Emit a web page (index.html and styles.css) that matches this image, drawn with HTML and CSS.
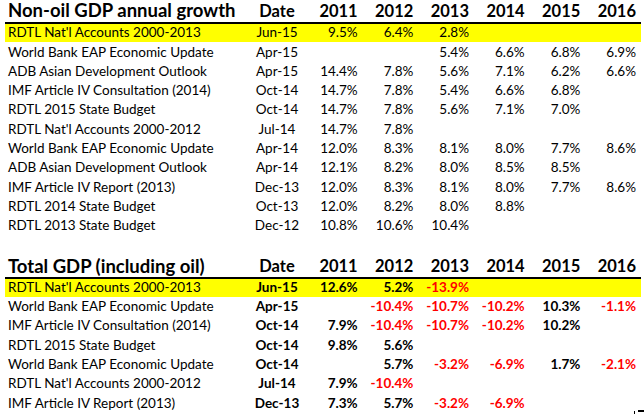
FILE: index.html
```html
<!DOCTYPE html>
<html>
<head>
<meta charset="utf-8">
<link rel="stylesheet" href="styles.css">
</head>
<body>
<div class="sheet">
  <div class="tbl">
    <div class="row head">
      <div class="name">Non-oil GDP annual growth</div><div class="date">Date</div>
      <div class="num">2011</div><div class="num">2012</div><div class="num">2013</div><div class="num">2014</div><div class="num">2015</div><div class="num">2016</div>
    </div>
    <div class="row hl">
      <div class="name">RDTL Nat'l Accounts 2000-2013</div><div class="date">Jun-15</div>
      <div class="num">9.5%</div><div class="num">6.4%</div><div class="num">2.8%</div><div class="num"></div><div class="num"></div><div class="num"></div>
    </div>
    <div class="row">
      <div class="name">World Bank EAP Economic Update</div><div class="date">Apr-15</div>
      <div class="num"></div><div class="num"></div><div class="num">5.4%</div><div class="num">6.6%</div><div class="num">6.8%</div><div class="num">6.9%</div>
    </div>
    <div class="row">
      <div class="name">ADB Asian Development Outlook</div><div class="date">Apr-15</div>
      <div class="num">14.4%</div><div class="num">7.8%</div><div class="num">5.6%</div><div class="num">7.1%</div><div class="num">6.2%</div><div class="num">6.6%</div>
    </div>
    <div class="row">
      <div class="name">IMF Article IV Consultation (2014)</div><div class="date">Oct-14</div>
      <div class="num">14.7%</div><div class="num">7.8%</div><div class="num">5.4%</div><div class="num">6.6%</div><div class="num">6.8%</div><div class="num"></div>
    </div>
    <div class="row">
      <div class="name">RDTL 2015 State Budget</div><div class="date">Oct-14</div>
      <div class="num">14.7%</div><div class="num">7.8%</div><div class="num">5.6%</div><div class="num">7.1%</div><div class="num">7.0%</div><div class="num"></div>
    </div>
    <div class="row">
      <div class="name">RDTL Nat'l Accounts 2000-2012</div><div class="date">Jul-14</div>
      <div class="num">14.7%</div><div class="num">7.8%</div><div class="num"></div><div class="num"></div><div class="num"></div><div class="num"></div>
    </div>
    <div class="row">
      <div class="name">World Bank EAP Economic Update</div><div class="date">Apr-14</div>
      <div class="num">12.0%</div><div class="num">8.3%</div><div class="num">8.1%</div><div class="num">8.0%</div><div class="num">7.7%</div><div class="num">8.6%</div>
    </div>
    <div class="row">
      <div class="name">ADB Asian Development Outlook</div><div class="date">Apr-14</div>
      <div class="num">12.1%</div><div class="num">8.2%</div><div class="num">8.0%</div><div class="num">8.5%</div><div class="num">8.5%</div><div class="num"></div>
    </div>
    <div class="row">
      <div class="name">IMF Article IV Report (2013)</div><div class="date">Dec-13</div>
      <div class="num">12.0%</div><div class="num">8.3%</div><div class="num">8.1%</div><div class="num">8.0%</div><div class="num">7.7%</div><div class="num">8.6%</div>
    </div>
    <div class="row">
      <div class="name">RDTL 2014 State Budget</div><div class="date">Oct-13</div>
      <div class="num">12.0%</div><div class="num">8.2%</div><div class="num">8.0%</div><div class="num">8.8%</div><div class="num"></div><div class="num"></div>
    </div>
    <div class="row">
      <div class="name">RDTL 2013 State Budget</div><div class="date">Dec-12</div>
      <div class="num">10.8%</div><div class="num">10.6%</div><div class="num">10.4%</div><div class="num"></div><div class="num"></div><div class="num"></div>
    </div>
  </div>

  <div class="spacer"></div>

  <div class="tbl total">
    <div class="row head head2">
      <div class="name">Total GDP (including oil)</div><div class="date">Date</div>
      <div class="num">2011</div><div class="num">2012</div><div class="num">2013</div><div class="num">2014</div><div class="num">2015</div><div class="num">2016</div>
    </div>
    <div class="row hl">
      <div class="name">RDTL Nat'l Accounts 2000-2013</div><div class="date">Jun-15</div>
      <div class="num">12.6%</div><div class="num">5.2%</div><div class="num neg">-13.9%</div><div class="num"></div><div class="num"></div><div class="num"></div>
    </div>
    <div class="row">
      <div class="name">World Bank EAP Economic Update</div><div class="date">Apr-15</div>
      <div class="num"></div><div class="num neg">-10.4%</div><div class="num neg">-10.7%</div><div class="num neg">-10.2%</div><div class="num">10.3%</div><div class="num neg">-1.1%</div>
    </div>
    <div class="row">
      <div class="name">IMF Article IV Consultation (2014)</div><div class="date">Oct-14</div>
      <div class="num">7.9%</div><div class="num neg">-10.4%</div><div class="num neg">-10.7%</div><div class="num neg">-10.2%</div><div class="num">10.2%</div><div class="num"></div>
    </div>
    <div class="row">
      <div class="name">RDTL 2015 State Budget</div><div class="date">Oct-14</div>
      <div class="num">9.8%</div><div class="num">5.6%</div><div class="num"></div><div class="num"></div><div class="num"></div><div class="num"></div>
    </div>
    <div class="row">
      <div class="name">World Bank EAP Economic Update</div><div class="date">Oct-14</div>
      <div class="num"></div><div class="num">5.7%</div><div class="num neg">-3.2%</div><div class="num neg">-6.9%</div><div class="num">1.7%</div><div class="num neg">-2.1%</div>
    </div>
    <div class="row">
      <div class="name">RDTL Nat'l Accounts 2000-2012</div><div class="date">Jul-14</div>
      <div class="num">7.9%</div><div class="num neg">-10.4%</div><div class="num"></div><div class="num"></div><div class="num"></div><div class="num"></div>
    </div>
    <div class="row">
      <div class="name">IMF Article IV Report (2013)</div><div class="date">Dec-13</div>
      <div class="num">7.3%</div><div class="num">5.7%</div><div class="num neg">-3.2%</div><div class="num neg">-6.9%</div><div class="num"></div><div class="num"></div>
    </div>
  </div>
</div>
<div class="edge-mark"><span class="tick"></span><span class="bar"></span></div>
</body>
</html>
```

FILE: styles.css
```css
html, body {
  margin: 0;
  padding: 0;
  background: #fff;
}
body {
  font-family: Lato, "Liberation Sans", sans-serif;
  font-size: 13.5px;
  color: #000;
  overflow: hidden;
  position: relative;
  height: 414px;
}
.sheet {
  padding-left: 5px;
  width: 636px;
}
.row {
  display: grid;
  grid-template-columns: 242px 60px repeat(6, 1fr);
  height: 19.3px;
  align-items: end;
  line-height: 16px;
}
.row > div {
  padding-bottom: 3px;
  white-space: nowrap;
}
.name {
  padding-left: 3px;
}
.date {
  text-align: center;
}
.num {
  text-align: right;
  padding-right: 5px;
}
.head {
  height: 22px;
  font-weight: bold;
  font-size: 16.5px;
  line-height: 20px;
  border-bottom: 2px solid #000;
}
.head > div {
  padding-bottom: 1.8px;
}
.head > .name {
  font-size: 18.5px;
  padding-bottom: 2.5px;
}
.head2 {
  height: 21px;
}
.hl {
  background: linear-gradient(#ffff00 0 18px, transparent 18px);
}
.spacer {
  height: 19.3px;
}
.total .date,
.total .num {
  font-weight: bold;
}
.neg {
  color: #ff0000;
}
.edge-mark {
  position: absolute;
  left: 630px;
  top: 410px;
  width: 14px;
  height: 4px;
}
.edge-mark .tick {
  position: absolute;
  left: 4px;
  top: 1px;
  width: 1px;
  height: 3px;
  background: #000;
}
.edge-mark .bar {
  position: absolute;
  left: 8px;
  top: 0;
  width: 6px;
  height: 2px;
  background: #000;
}
```
